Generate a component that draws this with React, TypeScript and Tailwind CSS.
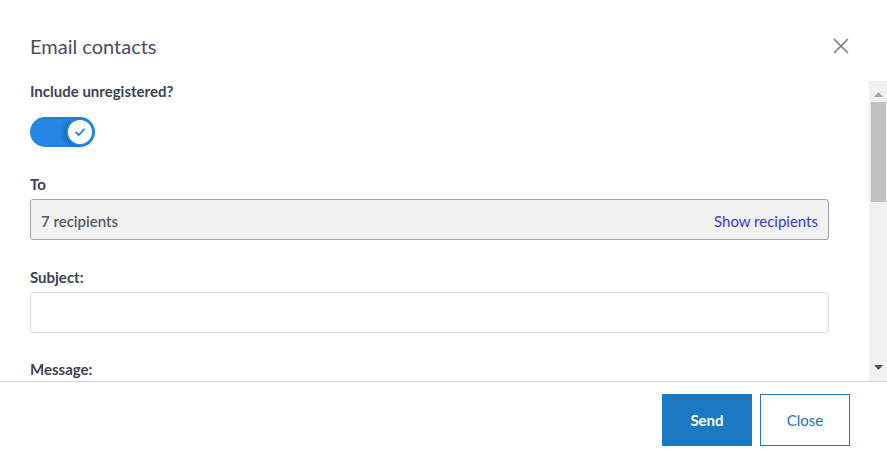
import React, { useState } from "react";

const font = { fontFamily: "Lato, 'Noto Sans', sans-serif" };

const Toggle: React.FC<{ on: boolean; onChange: (v: boolean) => void }> = ({ on, onChange }) => (
  <button
    type="button"
    onClick={() => onChange(!on)}
    className={`relative flex h-[30px] w-[65px] items-center rounded-full ${on ? "bg-[#2486e2]" : "bg-[#c4c7cc]"}`}
  >
    <span
      className={`absolute top-[1px] flex h-[28px] w-[28px] items-center justify-center rounded-full border-2 border-[#2486e2] bg-white shadow-[-2px_1px_4px_rgba(0,0,0,0.25)] ${on ? "left-[36px]" : "left-[1px]"}`}
    >
      {on && (
        <svg width="12" height="12" viewBox="0 0 12 12" fill="none">
          <path d="M2 6.3 L4.8 9 L10 3.3" stroke="#2486e2" strokeWidth="1.8" strokeLinecap="round" strokeLinejoin="round" />
        </svg>
      )}
    </span>
  </button>
);

const ScrollBar = () => (
  <div className="flex w-[18px] shrink-0 flex-col items-center bg-[#f1f1f1]">
    <div className="flex h-[20px] w-full items-end justify-center pb-[4px]">
      <svg width="9" height="5" viewBox="0 0 9 5">
        <path d="M0 5 L4.5 0 L9 5 Z" fill="#a3a3a3" />
      </svg>
    </div>
    <div className="mt-[1px] h-[100px] w-[15px] bg-[#c1c1c1]" />
    <div className="flex-1" />
    <div className="flex h-[20px] w-full items-start justify-center pt-[4px]">
      <svg width="9" height="5" viewBox="0 0 9 5">
        <path d="M0 0 L9 0 L4.5 5 Z" fill="#505050" />
      </svg>
    </div>
  </div>
);

export default function App() {
  const [include, setInclude] = useState(true);

  return (
    <div style={font} className="flex h-[450px] w-[887px] flex-col bg-white text-[#3d4350]">
      {/* header */}
      <div className="flex h-[81px] shrink-0 items-start justify-between pl-[30px] pr-[36px] pt-[33px]">
        <h2 className="text-[20px] leading-[26px] text-[#4a4f5c]">Email contacts</h2>
        <button type="button" className="mt-[3px] p-[2px]">
          <svg width="16" height="16" viewBox="0 0 16 16" fill="none">
            <path d="M1 1 L15 15 M15 1 L1 15" stroke="#7a7a7a" strokeWidth="1.5" />
          </svg>
        </button>
      </div>

      {/* body */}
      <div className="flex h-[300px] shrink-0">
        <div className="flex-1 overflow-hidden pl-[30px] pr-[40px]">
          <div className="text-[15px] font-bold leading-[20px]">Include unregistered?</div>
          <div className="mt-[16px]">
            <Toggle on={include} onChange={setInclude} />
          </div>

          <div className="mt-[27px] text-[15px] font-bold leading-[20px]">To</div>
          <div className="mt-[5px] flex h-[41px] items-center justify-between rounded-[3px] border border-[#a5a5a5] bg-[#f1f1f1] px-[10px] pt-[3px] text-[15px]">
            <span className="font-semibold text-[#555a62]">7 recipients</span>
            <button type="button" className="text-[#3a3ad0]">Show recipients</button>
          </div>

          <div className="mt-[27px] text-[15px] font-bold leading-[20px]">Subject:</div>
          <input
            type="text"
            className="mt-[5px] block h-[41px] w-full rounded-[3px] border border-[#dcdcdc] px-[10px] text-[15px] outline-none"
          />

          <div className="mt-[26px] text-[15px] font-bold leading-[20px]">Message:</div>
          <textarea className="mt-[5px] block h-[470px] w-full resize-none rounded-[3px] border border-[#dcdcdc] p-[10px] text-[15px] outline-none" />
        </div>
        <ScrollBar />
      </div>

      {/* footer */}
      <div className="flex flex-1 items-start justify-end gap-[8px] border-t border-[#d9d9d9] pr-[37px] pt-[12px]">
        <button type="button" className="h-[52px] w-[90px] bg-[#1b78c2] text-[15px] font-bold text-white">
          Send
        </button>
        <button type="button" className="h-[52px] w-[90px] border border-[#1b78c2] bg-white text-[15px] text-[#1b6fb5]">
          Close
        </button>
      </div>
    </div>
  );
}
